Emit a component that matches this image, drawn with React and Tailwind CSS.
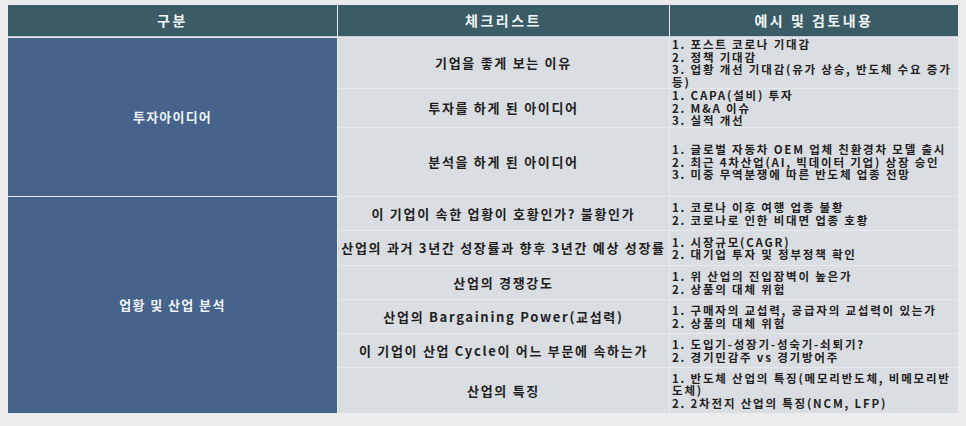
import React from "react";

const font = { fontFamily: '"Noto Sans CJK KR", "Noto Sans", sans-serif' };

function C2({ children, row }) {
  return (
    <div
      className={`${row} bg-[#dadde2] flex items-center justify-center text-[13px] leading-[16px] font-bold tracking-[1.7px] text-[#1f1f1f] whitespace-nowrap`}
    >
      {children}
    </div>
  );
}

function C3({ lines, row }) {
  return (
    <div
      className={`${row} bg-[#dadde2] flex flex-col justify-center pl-[2px] text-[11.5px] leading-[12.5px] font-bold tracking-[1.8px] text-[#1f1f1f] whitespace-nowrap`}
    >
      {lines.map((l, i) => (
        <div key={i} className="h-[12.5px]">{l}</div>
      ))}
    </div>
  );
}

export default function App() {
  return (
    <div className="w-[966px] h-[426px] bg-[#ececec] pt-[5px] pl-[8px]" style={font}>
      <div className="grid grid-cols-[329px_331px_288px] grid-rows-[32px_50px_38px_68px_33px_34px_33px_33px_33px_45px] gap-px bg-[#e6eaef] w-[950px]">
        <div className="row-start-1 col-start-1 bg-[#3a5c66] flex items-center justify-center text-[#f2f5f6] text-[14px] font-bold tracking-[2.5px] border-b border-[#b9ccd6]">
          구분
        </div>
        <div className="row-start-1 col-start-2 bg-[#3a5c66] flex items-center justify-center text-[#f2f5f6] text-[14px] font-bold tracking-[2.5px] border-b border-[#b9ccd6]">
          체크리스트
        </div>
        <div className="row-start-1 col-start-3 bg-[#3a5c66] flex items-center justify-center text-[#f2f5f6] text-[14px] font-bold tracking-[2.5px] border-b border-[#b9ccd6]">
          예시 및 검토내용
        </div>

        <div className="row-start-2 row-end-5 col-start-1 bg-[#45638b] flex items-center justify-center text-[#f0f3f7] text-[13px] font-bold tracking-[1.2px]">
          투자아이디어
        </div>
        <div className="row-start-5 row-end-11 col-start-1 bg-[#45638b] flex items-center justify-center text-[#f0f3f7] text-[13px] font-bold tracking-[1.4px]">
          업황 및 산업 분석
        </div>

        <C2 row="row-start-2 col-start-2">기업을 좋게 보는 이유</C2>
        <C3
          row="row-start-2 col-start-3"
          lines={[
            "1. 포스트 코로나 기대감",
            "2. 정책 기대감",
            "3. 업황 개선 기대감(유가 상승, 반도체 수요 증가",
            "등)",
          ]}
        />
        <C2 row="row-start-3 col-start-2">투자를 하게 된 아이디어</C2>
        <C3 row="row-start-3 col-start-3" lines={["1. CAPA(설비) 투자", "2. M&A 이슈", "3. 실적 개선"]} />
        <C2 row="row-start-4 col-start-2">분석을 하게 된 아이디어</C2>
        <C3
          row="row-start-4 col-start-3"
          lines={[
            "1. 글로벌 자동차 OEM 업체 친환경차 모델 출시",
            "2. 최근 4차산업(AI, 빅데이터 기업) 상장 승인",
            "3. 미중 무역분쟁에 따른 반도체 업종 전망",
          ]}
        />
        <C2 row="row-start-5 col-start-2">이 기업이 속한 업황이 호황인가? 불황인가</C2>
        <C3 row="row-start-5 col-start-3" lines={["1. 코로나 이후 여행 업종 불황", "2. 코로나로 인한 비대면 업종 호황"]} />
        <C2 row="row-start-6 col-start-2">산업의 과거 3년간 성장률과 향후 3년간 예상 성장률</C2>
        <C3 row="row-start-6 col-start-3" lines={["1. 시장규모(CAGR)", "2. 대기업 투자 및 정부정책 확인"]} />
        <C2 row="row-start-7 col-start-2">산업의 경쟁강도</C2>
        <C3 row="row-start-7 col-start-3" lines={["1. 위 산업의 진입장벽이 높은가", "2. 상품의 대체 위험"]} />
        <C2 row="row-start-8 col-start-2">산업의 Bargaining Power(교섭력)</C2>
        <C3
          row="row-start-8 col-start-3"
          lines={["1. 구매자의 교섭력, 공급자의 교섭력이 있는가", "2. 상품의 대체 위험"]}
        />
        <C2 row="row-start-9 col-start-2">이 기업이 산업 Cycle이 어느 부문에 속하는가</C2>
        <C3 row="row-start-9 col-start-3" lines={["1. 도입기-성장기-성숙기-쇠퇴기?", "2. 경기민감주 vs 경기방어주"]} />
        <C2 row="row-start-10 col-start-2">산업의 특징</C2>
        <C3
          row="row-start-10 col-start-3"
          lines={[
            "1. 반도체 산업의 특징(메모리반도체, 비메모리반",
            "도체)",
            "2. 2차전지 산업의 특징(NCM, LFP)",
          ]}
        />
      </div>
    </div>
  );
}
